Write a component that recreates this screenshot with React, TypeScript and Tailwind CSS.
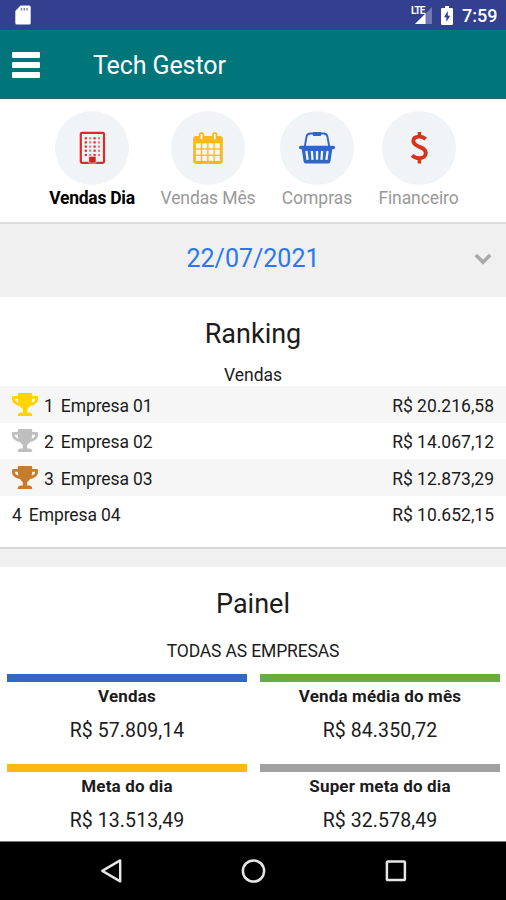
import { FaTrophy } from 'react-icons/fa'

interface RankingItem {
  position: number
  name: string
  total: string
  trophy?: string
}

interface PanelItem {
  title: string
  value: string
  bar: string
}

const ranking: RankingItem[] = [
  { position: 1, name: 'Empresa 01', total: 'R$ 20.216,58', trophy: 'text-[#ffd400]' },
  { position: 2, name: 'Empresa 02', total: 'R$ 14.067,12', trophy: 'text-[#bfbfbf]' },
  { position: 3, name: 'Empresa 03', total: 'R$ 12.873,29', trophy: 'text-[#c97b2c]' },
  { position: 4, name: 'Empresa 04', total: 'R$ 10.652,15' },
]

const panel: PanelItem[] = [
  { title: 'Vendas', value: 'R$ 57.809,14', bar: 'bg-[#3168c2]' },
  { title: 'Venda média do mês', value: 'R$ 84.350,72', bar: 'bg-[#67ad40]' },
  { title: 'Meta do dia', value: 'R$ 13.513,49', bar: 'bg-[#fdb913]' },
  { title: 'Super meta do dia', value: 'R$ 32.578,49', bar: 'bg-[#a2a2a2]' },
]

function BuildingIcon() {
  return (
    <svg className="h-10 w-10" viewBox="0 0 40 40" fill="none">
      <rect x="8.8" y="4.8" width="23.2" height="30" rx="1.2" stroke="#dd2a2a" strokeWidth="2.2" />
      {[10.3, 14.4, 18.6, 22.7, 27].map((y) =>
        [13.8, 18.2, 22.6, 27].map((x) => (
          <rect key={`${x}-${y}`} x={x - 1.1} y={y - 1.1} width="2.2" height="2.2" fill="#dd2a2a" opacity={x === 13.8 || x === 22.6 ? 1 : 0.6} />
        ))
      )}
      <path d="M16.8 35V28.4h7.2V35z" fill="#cf1f1f" stroke="#f1f3f5" strokeWidth="0.6" />
    </svg>
  )
}

function CalendarIcon() {
  return (
    <svg className="h-10 w-10" viewBox="0 0 40 40" fill="none">
      <path d="M8 7.9h24a2.8 2.8 0 0 1 2.8 2.8v22.4a2.8 2.8 0 0 1-2.8 2.8H8a2.8 2.8 0 0 1-2.8-2.8V10.7A2.8 2.8 0 0 1 8 7.9z" fill="#fbb81c" />
      {[15.3, 21.6, 27.9].map((y) =>
        [7.9, 14.2, 20.5, 26.8].map((x) => (
          <rect key={`${x}-${y}`} x={x} y={y} width="5" height="5" fill="#f7f5ee" />
        ))
      )}
      <rect x="11.7" y="4.8" width="3.6" height="7.6" rx="1.8" fill="#f7f5ee" stroke="#fbb81c" strokeWidth="1.7" />
      <rect x="25" y="4.8" width="3.6" height="7.6" rx="1.8" fill="#f7f5ee" stroke="#fbb81c" strokeWidth="1.7" />
    </svg>
  )
}

function BasketIcon() {
  return (
    <svg className="h-10 w-10" viewBox="0 0 40 40" fill="none">
      <path d="M7.8 18.5l1.7-9.6c.4-2.3 1.5-3.4 3.9-3.4h13.2c2.4 0 3.5 1.1 3.9 3.4l1.7 9.6" stroke="#2f67c4" strokeWidth="1.9" />
      <rect x="15.8" y="3.9" width="8.4" height="4" rx="1" fill="#2f67c4" />
      <path d="M3.7 17.7h32.6a1.2 1.2 0 0 1 0 3.6h-1l-1.9 12.2a2.2 2.2 0 0 1-2.2 1.9H8.8a2.2 2.2 0 0 1-2.2-1.9L4.7 21.3h-1a1.2 1.2 0 0 1 0-3.6z" fill="#2f67c4" />
      <path d="M9.4 23l1.2 8.8M14.9 23l.6 8.8M20 23v8.8M25.1 23l-.6 8.8M30.6 23l-1.2 8.8" stroke="#eef3f8" strokeWidth="2.3" />
    </svg>
  )
}

function DollarIcon() {
  return (
    <svg className="h-10 w-10" viewBox="0 0 40 40" fill="none" stroke="#d9331c" strokeWidth="3.9">
      <path d="M26.7 11.2c-1.7-1.7-3.9-2.6-6.4-2.6-3.7 0-6 1.7-6 4.5 0 7 12.5 4.6 12.5 11.9 0 3.2-2.6 5.2-6.4 5.2-3 0-5.4-1-7.3-2.9" />
      <path d="M20.4 8.5V4.1M20.4 35.5v-5" strokeWidth="3.4" />
    </svg>
  )
}

const tabs = [
  { label: 'Vendas Dia', icon: <BuildingIcon />, style: 'w-[88px] font-bold text-black tracking-[-0.25px]' },
  { label: 'Vendas Mês', icon: <CalendarIcon />, style: 'w-[94px] text-[#999] tracking-[-0.1px]' },
  { label: 'Compras', icon: <BasketIcon />, style: 'w-[74px] text-[#999]' },
  { label: 'Financeiro', icon: <DollarIcon />, style: 'w-[79px] text-[#999] tracking-[-0.1px]' },
]

function StatusBar() {
  return (
    <div className="flex h-[30px] items-center bg-[#333f8f] pr-[9px] pl-[15px] text-white">
      <svg className="h-[20px] w-[16px]" viewBox="0 0 16 20">
        <path d="M5.5.5h8.7a1.500 1.500 0 0 1 1.500 1.500v16a1.500 1.500 0 0 1-1.500 1.500H1.800A1.500 1.500 0 0 1 .3 18V6z" fill="#fff" />
        <path d="M6.500 3v2.500M9.300 3v2.500M12 3v2.500" stroke="#777d9c" strokeWidth="1.400" />
      </svg>
      <div className="relative ml-auto h-[20px] w-[23px]">
        <svg className="h-[20px] w-[23px]" viewBox="0 0 23 20">
          <path d="M23 2v17H6z" fill="#7079b3" />
          <path d="M16.5 8.5V19H6z" fill="#fff" />
        </svg>
        <span className="absolute top-px left-[2px] bg-[#333f8f] text-[10px] leading-[9px] font-bold tracking-[-0.9px]">LTE</span>
      </div>
      <svg className="ml-[9px] h-[19px] w-[12px]" viewBox="0 0 12 19">
        <path d="M4 0h4v2h2.8A1.2 1.2 0 0 1 12 3.2v14.6a1.2 1.2 0 0 1-1.2 1.2H1.2A1.2 1.2 0 0 1 0 17.8V3.2A1.2 1.2 0 0 1 1.2 2H4z" fill="#fff" />
        <path d="M6.8 5L3 11.2h2.4V16L9.2 9.800H6.800z" fill="#333f8f" />
      </svg>
      <span className="ml-[9px] w-[35px] pt-[2px] text-[18px] leading-[30px] font-medium whitespace-nowrap">7:59</span>
    </div>
  )
}

export default function App() {
  return (
    <div className="flex h-[900px] w-[506px] flex-col overflow-hidden bg-[#f0f0f0] font-['Roboto',sans-serif] text-[#1c1c1c]">
      <StatusBar />

      <header className="flex h-[69px] items-center border-b border-[#2c5f62] bg-[#00757a] pl-[12px]">
        <button className="flex w-[28px] flex-col gap-[4px] pt-[2px]" aria-label="Menu">
          <span className="h-[6px] rounded-[1px] bg-white" />
          <span className="h-[6px] rounded-[1px] bg-white" />
          <span className="h-[6px] rounded-[1px] bg-white" />
        </button>
        <h1 className="ml-[53px] pt-[4px] text-[25px] tracking-[-0.1px] text-white">Tech Gestor</h1>
      </header>

      {/* Abas */}
      <nav className="flex h-[125px] justify-center gap-[25px] border-b-2 border-[#dcdcdc] bg-white pt-[12px]">
        {tabs.map((tab) => (
          <div key={tab.label} className={`flex flex-col items-center text-[17.5px] ${tab.style}`}>
            <div className="flex h-[74px] w-[74px] items-center justify-center rounded-full bg-[#f1f4f6]">{tab.icon}</div>
            <span className="mt-[2px] leading-[22px] whitespace-nowrap">{tab.label}</span>
          </div>
        ))}
      </nav>

      {/* Seletor de data */}
      <div className="flex h-[73px] items-center pr-[14px] pb-[4px] pl-[32px]">
        <span className="flex-1 text-center text-[25px] text-[#2a76f5]">22/07/2021</span>
        <svg className="h-[14px] w-[18px]" viewBox="0 0 18 14" fill="none">
          <path d="M1.8 3l7.2 7.2L16.2 3" stroke="#a9a9a9" strokeWidth="3.6" />
        </svg>
      </div>

      <section className="h-[252px] border-b-2 border-[#d9d9d9] bg-white">
        <h2 className="pt-[21px] text-center text-[27px] leading-[32px]">Ranking</h2>
        <p className="mt-[14px] text-center text-[17.5px] leading-[22px]">Vendas</p>
        <div className="text-[17.5px]">
          {ranking.map((item) => (
            <div key={item.position} className="flex h-[36.6px] items-center px-[12px] pt-[3px] odd:bg-[#f6f6f6]">
              {item.trophy && <FaTrophy className={`mr-[6px] mb-[3px] h-[23px] w-[26px] ${item.trophy}`} />}
              <span>{item.position}</span>
              <span className="ml-[7px] tracking-[-0.1px]">{item.name}</span>
              <span className="ml-auto">{item.total}</span>
            </div>
          ))}
        </div>
      </section>

      <section className="mt-[18px] h-[275px] border-b border-[#777] bg-white">
        <h2 className="pt-[21px] text-center text-[27px] leading-[32px]">Painel</h2>
        <p className="mt-[20px] text-center text-[17.5px] leading-[22px] tracking-[-0.15px]">TODAS AS EMPRESAS</p>
        <div className="mt-[12px] grid grid-cols-2 gap-x-[13px] gap-y-[20px] pr-[6px] pl-[7px]">
          {panel.map((item) => (
            <div key={item.title} className="flex h-[70px] flex-col items-center">
              <div className={`h-[8px] w-full shrink-0 ${item.bar}`} />
              <h3 className="mt-[3px] text-[17px] leading-[22px] font-bold tracking-[0.15px] whitespace-nowrap">{item.title}</h3>
              <p className="mt-[11px] text-[19.5px] leading-[26px] tracking-[0.1px] whitespace-nowrap">{item.value}</p>
            </div>
          ))}
        </div>
      </section>

      {/* Botões do sistema */}
      <footer className="flex flex-1 items-center justify-between bg-black px-[99px]">
        <svg className="h-[26px] w-[24px]" viewBox="0 0 24 26" fill="none">
          <path d="M21.2 2.4v21L3.300 12.900z" stroke="#e6e6e6" strokeWidth="2.400" strokeLinejoin="round" />
        </svg>
        <svg className="h-[26px] w-[26px]" viewBox="0 0 26 26" fill="none">
          <circle cx="12.5" cy="13" r="10.6" stroke="#e6e6e6" strokeWidth="2.5" />
        </svg>
        <svg className="h-[22px] w-[22px]" viewBox="0 0 22 22" fill="none">
          <rect x="1.9" y="1.6" width="18" height="18.4" rx="0.8" stroke="#e6e6e6" strokeWidth="2.5" />
        </svg>
      </footer>
    </div>
  )
}
